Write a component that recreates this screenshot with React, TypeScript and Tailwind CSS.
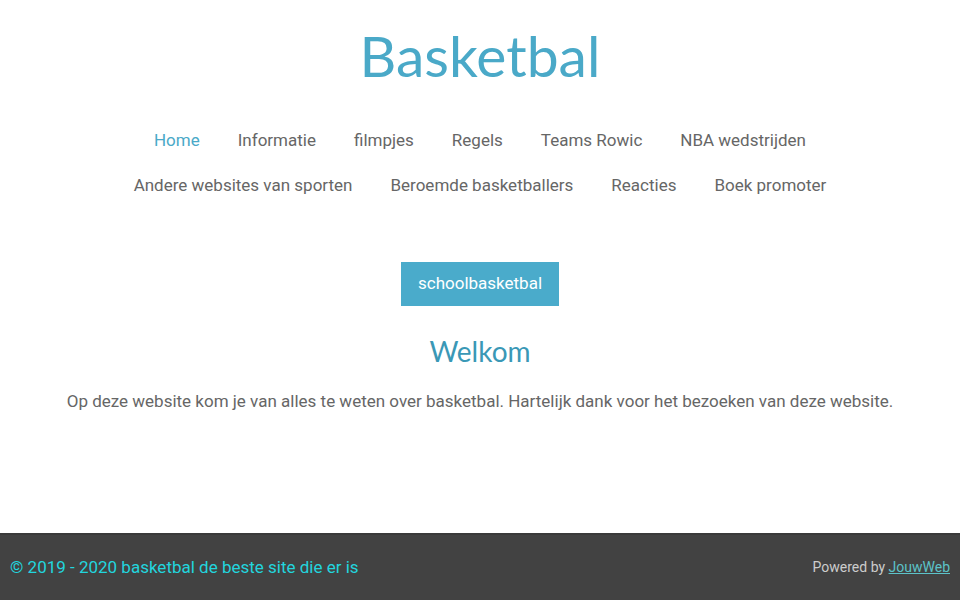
import React from "react";

const navRows = [
  ["Home", "Informatie", "filmpjes", "Regels", "Teams Rowic", "NBA wedstrijden"],
  ["Andere websites van sporten", "Beroemde basketballers", "Reacties", "Boek promoter"],
];

export default function App() {
  return (
    <div className="min-h-screen flex flex-col bg-white font-['Roboto',sans-serif]">
      <main className="flex-1 flex flex-col items-center">
        <h1 className="pt-[20px] text-[57px] leading-[70px] text-[#4aa9c8] font-['Lato',sans-serif] font-normal">
          Basketbal
        </h1>

        <nav className="mt-[28px] flex flex-col items-center">
          {navRows.map((row, i) => (
            <ul key={i} className="flex justify-center">
              {row.map((item) => (
                <li key={item}>
                  <a
                    href="#"
                    className={`block px-[19px] py-[11px] text-[17px] leading-[23px] ${
                      item === "Home" ? "text-[#4aa9c8]" : "text-[#666666]"
                    }`}
                  >
                    {item}
                  </a>
                </li>
              ))}
            </ul>
          ))}
        </nav>

        <a
          href="#"
          className="mt-[54px] w-[158px] h-[44px] flex items-center justify-center bg-[#4aabcb] text-white text-[17px]"
        >
          schoolbasketbal
        </a>

        <h2 className="mt-[25px] text-[28px] leading-[40px] text-[#3a98b6] font-['Lato',sans-serif] font-normal">
          Welkom
        </h2>

        <p className="mt-[17px] text-[17px] leading-[26px] text-[#666666]">
          Op deze website kom je van alles te weten over basketbal. Hartelijk dank voor het bezoeken van deze website.
        </p>
      </main>

      <footer className="h-[67px] bg-[#424242] border-t-2 border-[#3a3a3a] flex items-center justify-between px-[10px]">
        <span className="text-[17px] text-[#22d5de]">© 2019 - 2020 basketbal de beste site die er is</span>
        <span className="text-[14px] text-[#cccccc]">
          Powered by{" "}
          <a href="#" className="underline text-[#5cc3c9]">
            JouwWeb
          </a>
        </span>
      </footer>
    </div>
  );
}
